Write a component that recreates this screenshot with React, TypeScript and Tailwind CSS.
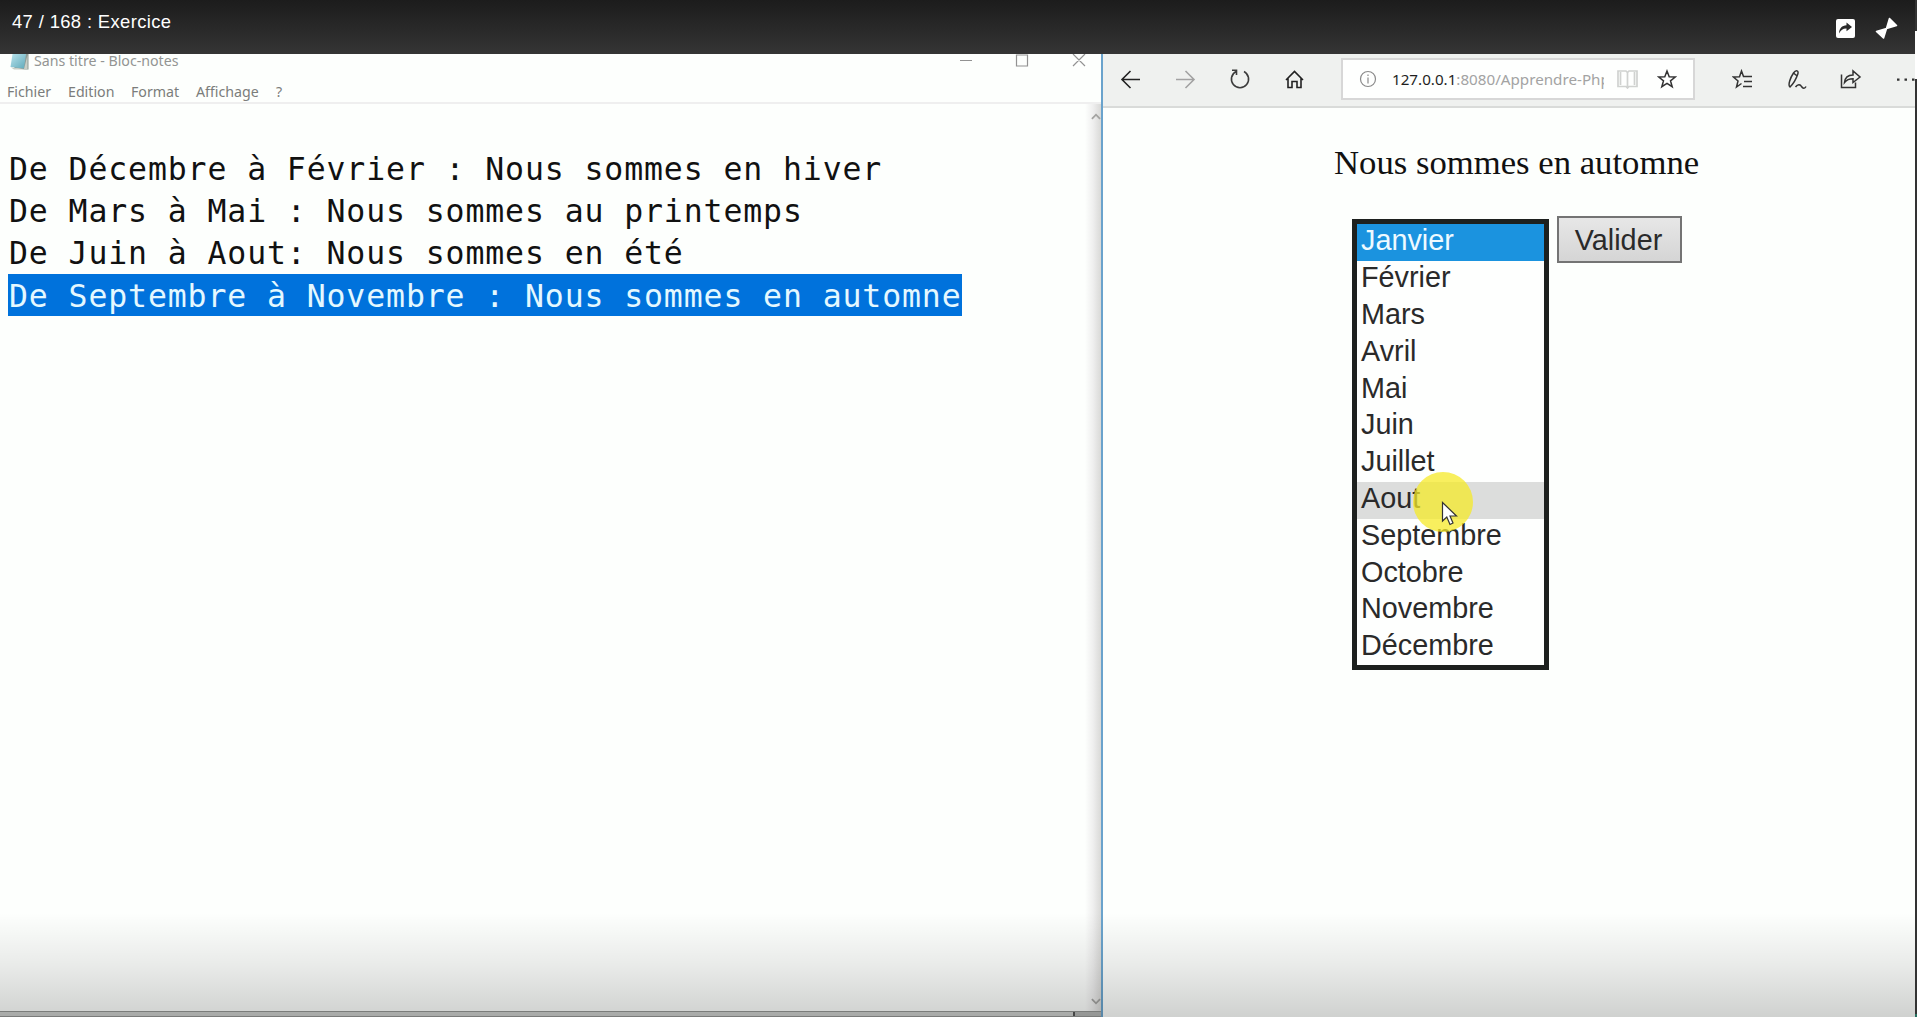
import React from "react";

const MONTHS = [
  "Janvier", "Février", "Mars", "Avril", "Mai", "Juin",
  "Juillet", "Aout", "Septembre", "Octobre", "Novembre", "Décembre",
];

const LINES = [
  "De Décembre à Février : Nous sommes en hiver",
  "De Mars à Mai : Nous sommes au printemps",
  "De Juin à Aout: Nous sommes en été",
];

function VideoHeader() {
  return (
    <header className="flex h-[54px] shrink-0 items-start justify-between bg-linear-to-b from-[#1c1c1c] to-[#353535] pl-3 pr-[17px] font-['Liberation_Sans',Arial,sans-serif] text-white">
      <h1 className="mt-[10px] text-[18.400px] leading-6 tracking-[0.370px] whitespace-nowrap">47 / 168 : Exercice</h1>
      <div className="mt-[17px] flex gap-[20px]">
        <svg className="mt-[2px] h-[19px] w-[19px]" viewBox="0 0 19 19">
          <rect width="19" height="19" rx="2" fill="#fff" />
          <path d="M3 14.5C3.2 9.5 6 6.500 10.500 6.300V3.500L16 8L10.500 12.300V9.600C7 9.500 5 11 3 14.500Z" fill="#2b2b2b" />
        </svg>
        <svg className="h-[23px] w-[23px]" viewBox="0 0 23 23">
          <path d="M14.500 1.500L21.500 8.500L11.500 11.500ZM11.500 11.500L8.500 21L1.500 14.500Z" fill="#fff" stroke="#fff" strokeWidth="1.600" strokeLinejoin="round" />
        </svg>
      </div>
    </header>
  );
}

function Notepad() {
  return (
    <section className="flex w-[1101px] shrink-0 flex-col bg-[#fdfffd]">
      <div className="flex h-[18px] items-start pl-[9px] font-['Noto_Sans',sans-serif] text-[#939593]">
        <svg className="h-[17px] w-[20px]" viewBox="0 0 20 17">
          <defs>
            <linearGradient id="pad" x1="0" y1="0" x2="1" y2="1">
              <stop offset="0" stopColor="#b9e3ec" />
              <stop offset="1" stopColor="#5fa9ba" />
            </linearGradient>
          </defs>
          <path d="M16 0H19.500V15.500H16L5 14Z" fill="#8d9a94" />
          <path d="M3.500 0H17L15 14.500L1.500 13Z" fill="url(#pad)" />
          <path d="M2 13.500L15 15L18.500 1V15.500H5Z" fill="#c9cec6" />
        </svg>
        <span className="ml-[5px] mt-[-2px] w-[150px] text-[14.200px] leading-[18px] whitespace-nowrap">Sans titre - Bloc-notes</span>
        <div className="ml-auto flex pr-[15px]">
          <svg className="h-[14px] w-[127px]" viewBox="0 0 127 14" fill="none" stroke="#929292" strokeWidth="1.200">
            <path d="M1 6.500H13M57.500 1H68.500V12H57.500ZM114 0L126 12M126 0L114 12" />
          </svg>
        </div>
      </div>
      <nav className="flex h-[32px] items-start border-b-2 border-[#efefef] pl-[7px] pt-[10px] font-['Noto_Sans',sans-serif] text-[14.200px] leading-[20px] text-[#7b7d7b]">
        <span className="w-[61px]">Fichier</span>
        <span className="w-[63px]">Edition</span>
        <span className="w-[65px]">Format</span>
        <span className="w-[80px]">Affichage</span>
        <span>?</span>
      </nav>
      <div className="flex min-h-0 flex-1">
        <div className="flex-1 pl-[8px] pt-[44px] font-['DejaVu_Sans_Mono',monospace] text-[31.500px] leading-[42px] tracking-[0.880px] text-[#111]">
          {LINES.map((line) => (
            <p key={line} className="pl-px whitespace-pre">{line}</p>
          ))}
          <p className="h-[42px] w-[954px] bg-[#0072dc] pl-px pt-px whitespace-pre text-[#e4f8ff]">De Septembre à Novembre : Nous sommes en automne</p>
        </div>
        <div className="flex w-[16px] flex-col items-end justify-between bg-linear-to-r from-[#fdfffd] via-[#efefef] to-[#d9d9d7] pt-[9px] pb-[6px]">
          <svg className="h-[7px] w-[10px]" viewBox="0 0 11 7" fill="none" stroke="#a3a3a1" strokeWidth="2"><path d="M1 6L5.500 1.500L10 6" /></svg>
          <svg className="h-[7px] w-[10px]" viewBox="0 0 11 7" fill="none" stroke="#a3a3a1" strokeWidth="2"><path d="M1 1L5.500 5.500L10 1" /></svg>
        </div>
      </div>
      <div className="flex h-[6px] shrink-0 border-y border-[#949694] bg-[#cdcfcd]">
        <div className="ml-[1073px] w-[2px] bg-[#555]" />
        <div className="flex-1 bg-[#b5b7b5]" />
      </div>
    </section>
  );
}

function BrowserToolbar() {
  return (
    <div className="flex h-[54px] shrink-0 items-start border-b-2 border-[#d9dbd9] bg-[#eff1ef]">
      <svg className="mt-[15px] ml-[17px] h-[22px] w-[185px] shrink-0" viewBox="0 0 185 22" fill="none" strokeWidth="1.600">
        <path d="M20 10.500H2M10.500 2L2 10.500L10.500 19" stroke="#222" />
        <path d="M56 10.500H74M65.500 2L74 10.500L65.500 19" stroke="#a2a2a2" />
        <path d="M124 2.500A8.600 8.600 0 1 1 116 2.500M112 1.300H116.500V6" stroke="#3c3c3c" />
        <path d="M166 11L174.500 2.500L183 11M168 9.500V18.500H172V12.500H177V18.500H181V9.500" stroke="#222" />
      </svg>
      <div className="mt-[4px] ml-[36px] flex h-[42px] w-[354px] shrink-0 items-center border-2 border-[#d7d7d7] bg-[#fefffe]">
        <svg className="ml-[16px] h-[18px] w-[18px] shrink-0" viewBox="0 0 18 18" fill="none" stroke="#8a8a8a" strokeWidth="1.200">
          <circle cx="9" cy="9" r="7.500" />
          <path d="M9 7.500V13.500M9 4.500V6" />
        </svg>
        <div className="ml-[15px] w-[212px] shrink-0 overflow-hidden font-['Noto_Sans',sans-serif] text-[15.200px] leading-[24px] whitespace-nowrap text-[#a3a3a3]">
          <span className="text-[#1f1f1f]">127.0.0.1</span>:8080/Apprendre-Php
        </div>
        <svg className="ml-[13px] h-[20px] w-[21px] shrink-0" viewBox="0 0 21 20" fill="none" stroke="#d0d2d0" strokeWidth="1.700">
          <path d="M1 2H9L10.500 3.500L12 2H20V17.500H12L10.500 19L9 17.500H1ZM10.500 3.500V18M3.500 3V16M17.500 3V16" />
        </svg>
        <svg className="ml-[19px] h-[20px] w-[20px] shrink-0" viewBox="0 0 20 20" fill="none" stroke="#333" strokeWidth="1.500">
          <path d="M10 2L12.200 7.700L18.300 8L13.500 11.800L15.200 17.700L10 14.400L4.800 17.700L6.500 11.800L1.700 8L7.800 7.700Z" />
        </svg>
      </div>
      <svg className="mt-[15px] ml-[37px] h-[22px] w-[187px] shrink-0" viewBox="0 0 187 22" fill="none" stroke="#333" strokeWidth="1.500">
        <path d="M11.500 7.500L9.500 2L7.500 7.800L1.500 8L6 12L4.500 18L9.500 14.500M9.500 2L11.500 7.500H20M12 12.500H20M11 17.500H20" />
        <path d="M58 18C55.500 16 58.500 8.500 61.500 4C64 .500 67 1.500 65.800 5C64.500 9 61 15 58 18ZM61.500 4L64.500 6.500M63.500 18C66 14.500 68.500 15.500 69.500 17.500C71 20 73 19.500 74 17.500" />
        <path d="M109.500 5.500V18.500H123.500V13.500M112.500 13.500C113 8.500 116.500 6 121 6V2L128 8L121 13.500V9.800C117 9.800 114.500 11 112.500 13.500Z" />
        <path d="M165 10.700H167.500M172.500 10.700H175M180 10.700H182.500" strokeWidth="2.200" />
      </svg>
    </div>
  );
}

function MonthList() {
  return (
    <ul className="relative h-[451px] w-[197px] border-[5px] border-[#1d201e] bg-[#fefffe] font-['Liberation_Sans',Arial,sans-serif] text-[28.800px] leading-[33px] text-[#2a2a2a]">
      {MONTHS.map((month) => (
        <li
          key={month}
          className={
            "h-[36.830px] pl-[4px] pt-[0.200px] " +
            (month === "Janvier" ? "bg-[#1b93df] text-[#eefaff]" : month === "Aout" ? "bg-[#dcdddc]" : "")
          }
        >
          {month}
        </li>
      ))}
      <li className="absolute top-[248px] left-[56px] h-[60px] w-[60px] rounded-full bg-[#f6e928]/75" aria-hidden="true">
        <svg className="absolute top-[29px] left-[28px] h-[25px] w-[17px]" viewBox="0 0 17 25">
          <path d="M1.500 1.500V20L5.800 16L9 23.500L12 22L9 15H15.500Z" fill="#fff" stroke="#333" strokeWidth="1.200" />
        </svg>
      </li>
    </ul>
  );
}

function Browser() {
  return (
    <section className="flex min-w-0 flex-1 flex-col overflow-hidden border-l-2 border-[#6aa3cc] bg-[#fdfffd]">
      <BrowserToolbar />
      <main className="pl-[249px]">
        <p className="mt-[34px] ml-[-18px] font-['Liberation_Serif','Times_New_Roman',serif] text-[34.700px] leading-[42px] whitespace-nowrap text-[#111]">
          Nous sommes en automne
        </p>
        <div className="mt-[32px] flex items-start gap-[8px]">
          <div className="mt-[3px]"><MonthList /></div>
          <button className="h-[47px] w-[125px] border-2 border-[#747474] bg-linear-to-b from-[#e7e7e7] to-[#d5d5d5] pr-[2px] font-['Liberation_Sans',Arial,sans-serif] text-[28.800px] leading-[42px] text-[#2a2a2a]">
            Valider
          </button>
        </div>
      </main>
    </section>
  );
}

export default function App() {
  return (
    <div className="flex h-[1017px] w-[1917px] overflow-hidden">
      <div className="relative flex w-[1915px] shrink-0 flex-col">
        <VideoHeader />
        <div className="flex min-h-0 flex-1">
          <Notepad />
          <Browser />
        </div>
        <div className="pointer-events-none absolute inset-x-0 bottom-0 h-[104px] bg-linear-to-b from-black/0 via-black/8 to-black/18" />
      </div>
      <div className="flex w-[2px] flex-col bg-[#333]">
        <div className="mt-[31px] h-[48px] bg-white" />
        <div className="mt-auto h-[3px] bg-[#267060]" />
      </div>
    </div>
  );
}
